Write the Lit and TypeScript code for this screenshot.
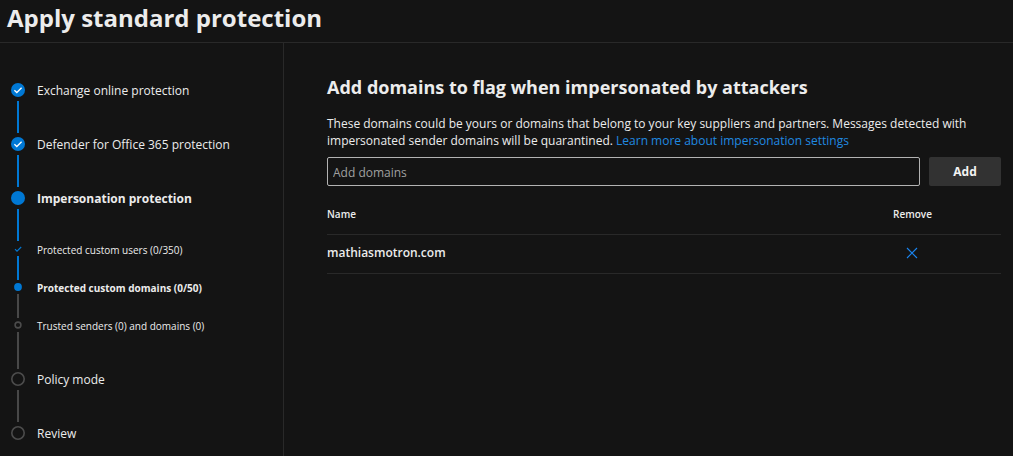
import { LitElement, html, css, svg, nothing } from "lit";
import { customElement, state } from "lit/decorators.js";
import { classMap } from "lit/directives/class-map.js";

type StepStatus = "done" | "current" | "todo";

interface Step {
  label: string;
  status: StepStatus;
  sub?: boolean;
}

const STEPS: Step[] = [
  { label: "Exchange online protection", status: "done" },
  { label: "Defender for Office 365 protection", status: "done" },
  { label: "Impersonation protection", status: "current" },
  { label: "Protected custom users (0/350)", status: "done", sub: true },
  { label: "Protected custom domains (0/50)", status: "current", sub: true },
  { label: "Trusted senders (0) and domains (0)", status: "todo", sub: true },
  { label: "Policy mode", status: "todo" },
  { label: "Review", status: "todo" },
];

@customElement("wizard-steps")
export class WizardSteps extends LitElement {
  static styles = css`
    :host {
      display: block;
    }
    .steps {
      list-style: none;
      margin: 0;
      padding: 0;
    }
    .step {
      display: grid;
      grid-template-columns: 14px 1fr;
      column-gap: 12px;
      height: 54px;
      font-size: 12px;
      line-height: 16px;
    }
    .step:last-child {
      height: 14px;
    }
    .step.sub {
      height: 38px;
      font-size: 10px;
      line-height: 10px;
    }
    .step.leaving {
      height: 51px;
    }
    .rail {
      display: flex;
      flex-direction: column;
      align-items: center;
      gap: 4px;
      padding-bottom: 4px;
    }
    .sub .rail {
      gap: 3px;
      padding-bottom: 3px;
    }
    .marker {
      display: block;
      flex: none;
      width: 14px;
      height: 14px;
    }
    .sub .marker {
      width: 8px;
      height: 8px;
    }
    .line {
      flex: 1;
      width: 2px;
      background: #0078d4;
    }
    .line.pending {
      background: #484848;
    }
    .current .label {
      font-weight: 700;
    }
    .label {
      white-space: nowrap;
    }
  `;

  private marker(step: Step) {
    if (step.sub) {
      const shape =
        step.status === "done"
          ? svg`<path d="M1 4.2 3 6.2 7.2 2" fill="none" stroke="#0078d4" stroke-width="1.1" />`
          : step.status === "current"
            ? svg`<circle cx="4" cy="4" r="3.9" fill="#0078d4" />`
            : svg`<circle cx="4" cy="4" r="2.9" fill="none" stroke="#4c4c4c" stroke-width="1.6" />`;
      return html`<svg class="marker" viewBox="0 0 8 8" aria-hidden="true">${shape}</svg>`;
    }
    const shape =
      step.status === "todo"
        ? svg`<circle cx="7" cy="7" r="6.2" fill="none" stroke="#4c4c4c" stroke-width="1.6" />`
        : svg`<circle cx="7" cy="7" r="7" fill="#0078d4" />`;
    const check =
      step.status === "done"
        ? svg`<path d="M3.4 7.2 5.8 9.5 10.6 4.7" fill="none" stroke="#fff" stroke-width="1.3" />`
        : nothing;
    return html`<svg class="marker" viewBox="0 0 14 14" aria-hidden="true">${shape}${check}</svg>`;
  }

  render() {
    return html`<ol class="steps">
      ${STEPS.map((step, i) => {
        const next = STEPS[i + 1];
        return html`<li
          class=${classMap({
            step: true,
            sub: !!step.sub,
            leaving: !!step.sub && !!next && !next.sub,
            current: step.status === "current",
          })}
        >
          <span class="rail">
            ${this.marker(step)}
            ${next
              ? html`<span class=${classMap({ line: true, pending: next.status === "todo" })}></span>`
              : nothing}
          </span>
          <span class="label">${step.label}</span>
        </li>`;
      })}
    </ol>`;
  }
}

@customElement("app-root")
export class AppRoot extends LitElement {
  static styles = css`
    :host {
      display: flex;
      flex-direction: column;
      min-height: 100vh;
      box-sizing: border-box;
      background: #141414;
      color: #ececec;
      font-family: "Open Sans", "Noto Sans", sans-serif;
      font-size: 12px;
    }
    .header {
      padding: 0 7px;
      border-bottom: 1px solid #292929;
    }
    .title {
      margin: 0;
      font-size: 24px;
      font-weight: 700;
      line-height: 36px;
      padding-bottom: 6px;
    }
    .body {
      flex: 1;
      display: grid;
      grid-template-columns: 284px minmax(0, 1fr);
    }
    .nav {
      padding: 40px 11px 0;
      border-right: 1px solid #292929;
    }
    .content {
      padding: 32px 12px 0 43px;
    }
    .heading {
      margin: 0 0 16px;
      font-size: 18px;
      font-weight: 700;
      line-height: 24px;
    }
    .text {
      margin: 0 0 8px;
      line-height: 17px;
    }
    .link {
      color: #2089e0;
      text-decoration: none;
    }
    .add {
      display: flex;
      gap: 9px;
      margin: 0;
    }
    .input {
      flex: 1;
      min-width: 0;
      box-sizing: border-box;
      height: 29px;
      padding: 2px 5px 0;
      border: 1px solid #b3b3b3;
      border-radius: 2px;
      background: transparent;
      color: inherit;
      font: inherit;
    }
    .input::placeholder {
      color: #a0a0a0;
      opacity: 1;
    }
    .button {
      width: 72px;
      height: 29px;
      padding: 0;
      border: 0;
      border-radius: 2px;
      background: #323232;
      color: #f3f3f3;
      font: inherit;
      font-weight: 700;
    }
    .table {
      width: 100%;
      margin-top: 9px;
      border-collapse: collapse;
      table-layout: fixed;
    }
    .cell {
      box-sizing: border-box;
      height: 39px;
      padding: 0 0 2px;
      border-bottom: 1px solid #292929;
      text-align: left;
      font-weight: 600;
    }
    .cell.head {
      padding: 0;
      font-size: 10px;
    }
    .action {
      width: 108px;
    }
    .remove {
      display: block;
      width: 38px;
      height: 24px;
      padding: 0;
      border: 0;
      background: none;
      color: #1a85f0;
    }
    .cross {
      display: block;
      width: 12px;
      height: 12px;
      margin: 0 auto;
    }
  `;

  @state() private domains = ["mathiasmotron.com"];

  private add(e: Event) {
    e.preventDefault();
    const input = this.renderRoot.querySelector("input") as HTMLInputElement;
    const value = input.value.trim();
    if (value) {
      this.domains = [...this.domains, value];
      input.value = "";
    }
  }

  private remove(domain: string) {
    this.domains = this.domains.filter((d) => d !== domain);
  }

  render() {
    return html`
      <header class="header"><h1 class="title">Apply standard protection</h1></header>
      <div class="body">
        <nav class="nav" aria-label="Steps"><wizard-steps></wizard-steps></nav>
        <main class="content">
          <h2 class="heading">Add domains to flag when impersonated by attackers</h2>
          <p class="text">
            These domains could be yours or domains that belong to your key suppliers and partners.
            Messages detected with impersonated sender domains will be quarantined.
            <a class="link" href="#learn">Learn more about impersonation settings</a>
          </p>
          <form class="add" @submit=${this.add}>
            <input class="input" type="text" aria-label="Add domains" placeholder="Add domains" />
            <button class="button" type="submit">Add</button>
          </form>
          <table class="table">
            <thead>
              <tr>
                <th class="cell head" scope="col">Name</th>
                <th class="cell head action" scope="col">Remove</th>
              </tr>
            </thead>
            <tbody>
              ${this.domains.map(
                (d) => html`<tr>
                  <td class="cell">${d}</td>
                  <td class="cell action">
                    <button class="remove" type="button" aria-label="Remove ${d}" @click=${() => this.remove(d)}>
                      <svg class="cross" viewBox="0 0 12 12" aria-hidden="true">
                        <path d="M1 1 11 11M11 1 1 11" fill="none" stroke="currentColor" stroke-width="1.1" />
                      </svg>
                    </button>
                  </td>
                </tr>`
              )}
            </tbody>
          </table>
        </main>
      </div>
    `;
  }
}
